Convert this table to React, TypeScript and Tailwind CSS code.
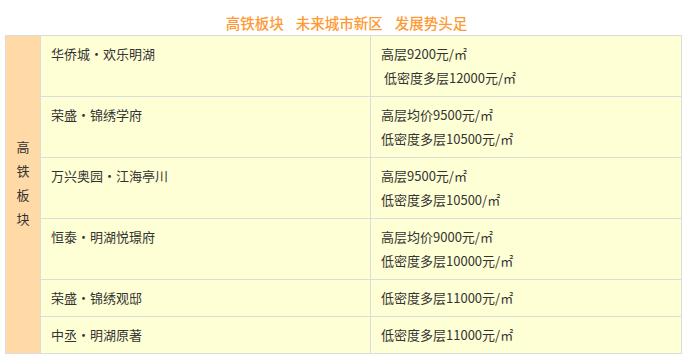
import React from 'react';

const rows: { name: string; prices: string[] }[] = [
  { name: '华侨城・欢乐明湖', prices: ['高层9200元/㎡', '\u00a0低密度多层12000元/㎡'] },
  { name: '荣盛・锦绣学府', prices: ['高层均价9500元/㎡', '低密度多层10500元/㎡'] },
  { name: '万兴奥园・江海亭川', prices: ['高层9500元/㎡', '低密度多层10500/㎡'] },
  { name: '恒泰・明湖悦璟府', prices: ['高层均价9000元/㎡', '低密度多层10000元/㎡'] },
  { name: '荣盛・锦绣观邸', prices: ['低密度多层11000元/㎡'] },
  { name: '中丞・明湖原著', prices: ['低密度多层11000元/㎡'] },
];

const App: React.FC = () => {
  return (
    <div
      className="w-[693px] h-[364px] bg-white text-[#333] text-[13px]"
      style={{ fontFamily: '"Noto Sans CJK SC", "Noto Sans", sans-serif' }}
    >
      <div className="pt-[12px] pb-[2px] text-center text-[14.5px] leading-[21px] font-medium text-[#ff9933]">
        <span>高铁板块</span>
        <span className="ml-[12px]">未来城市新区</span>
        <span className="ml-[12px]">发展势头足</span>
      </div>
      <table className="ml-[5px] w-[677px] border-collapse border border-[#dcdcdc]">
        <tbody>
          {rows.map((row, i) => (
            <tr key={row.name} className="bg-[#ffffd5]">
              {i === 0 && (
                <td
                  rowSpan={rows.length}
                  className="w-[35px] bg-[#ffd9a6] border border-[#dcdcdc] text-center align-middle pt-[6px] pb-[30px] leading-[24px]"
                >
                  高<br />铁<br />板<br />块
                </td>
              )}
              <td className="w-[330px] border border-[#dcdcdc] align-top px-[10px] py-[6px] leading-[24px]">
                {row.name}
              </td>
              <td className="border border-[#dcdcdc] align-top px-[10px] py-[6px] leading-[24px]">
                {row.prices.map((p) => (
                  <div key={p}>{p}</div>
                ))}
              </td>
            </tr>
          ))}
        </tbody>
      </table>
    </div>
  );
};

export default App;
